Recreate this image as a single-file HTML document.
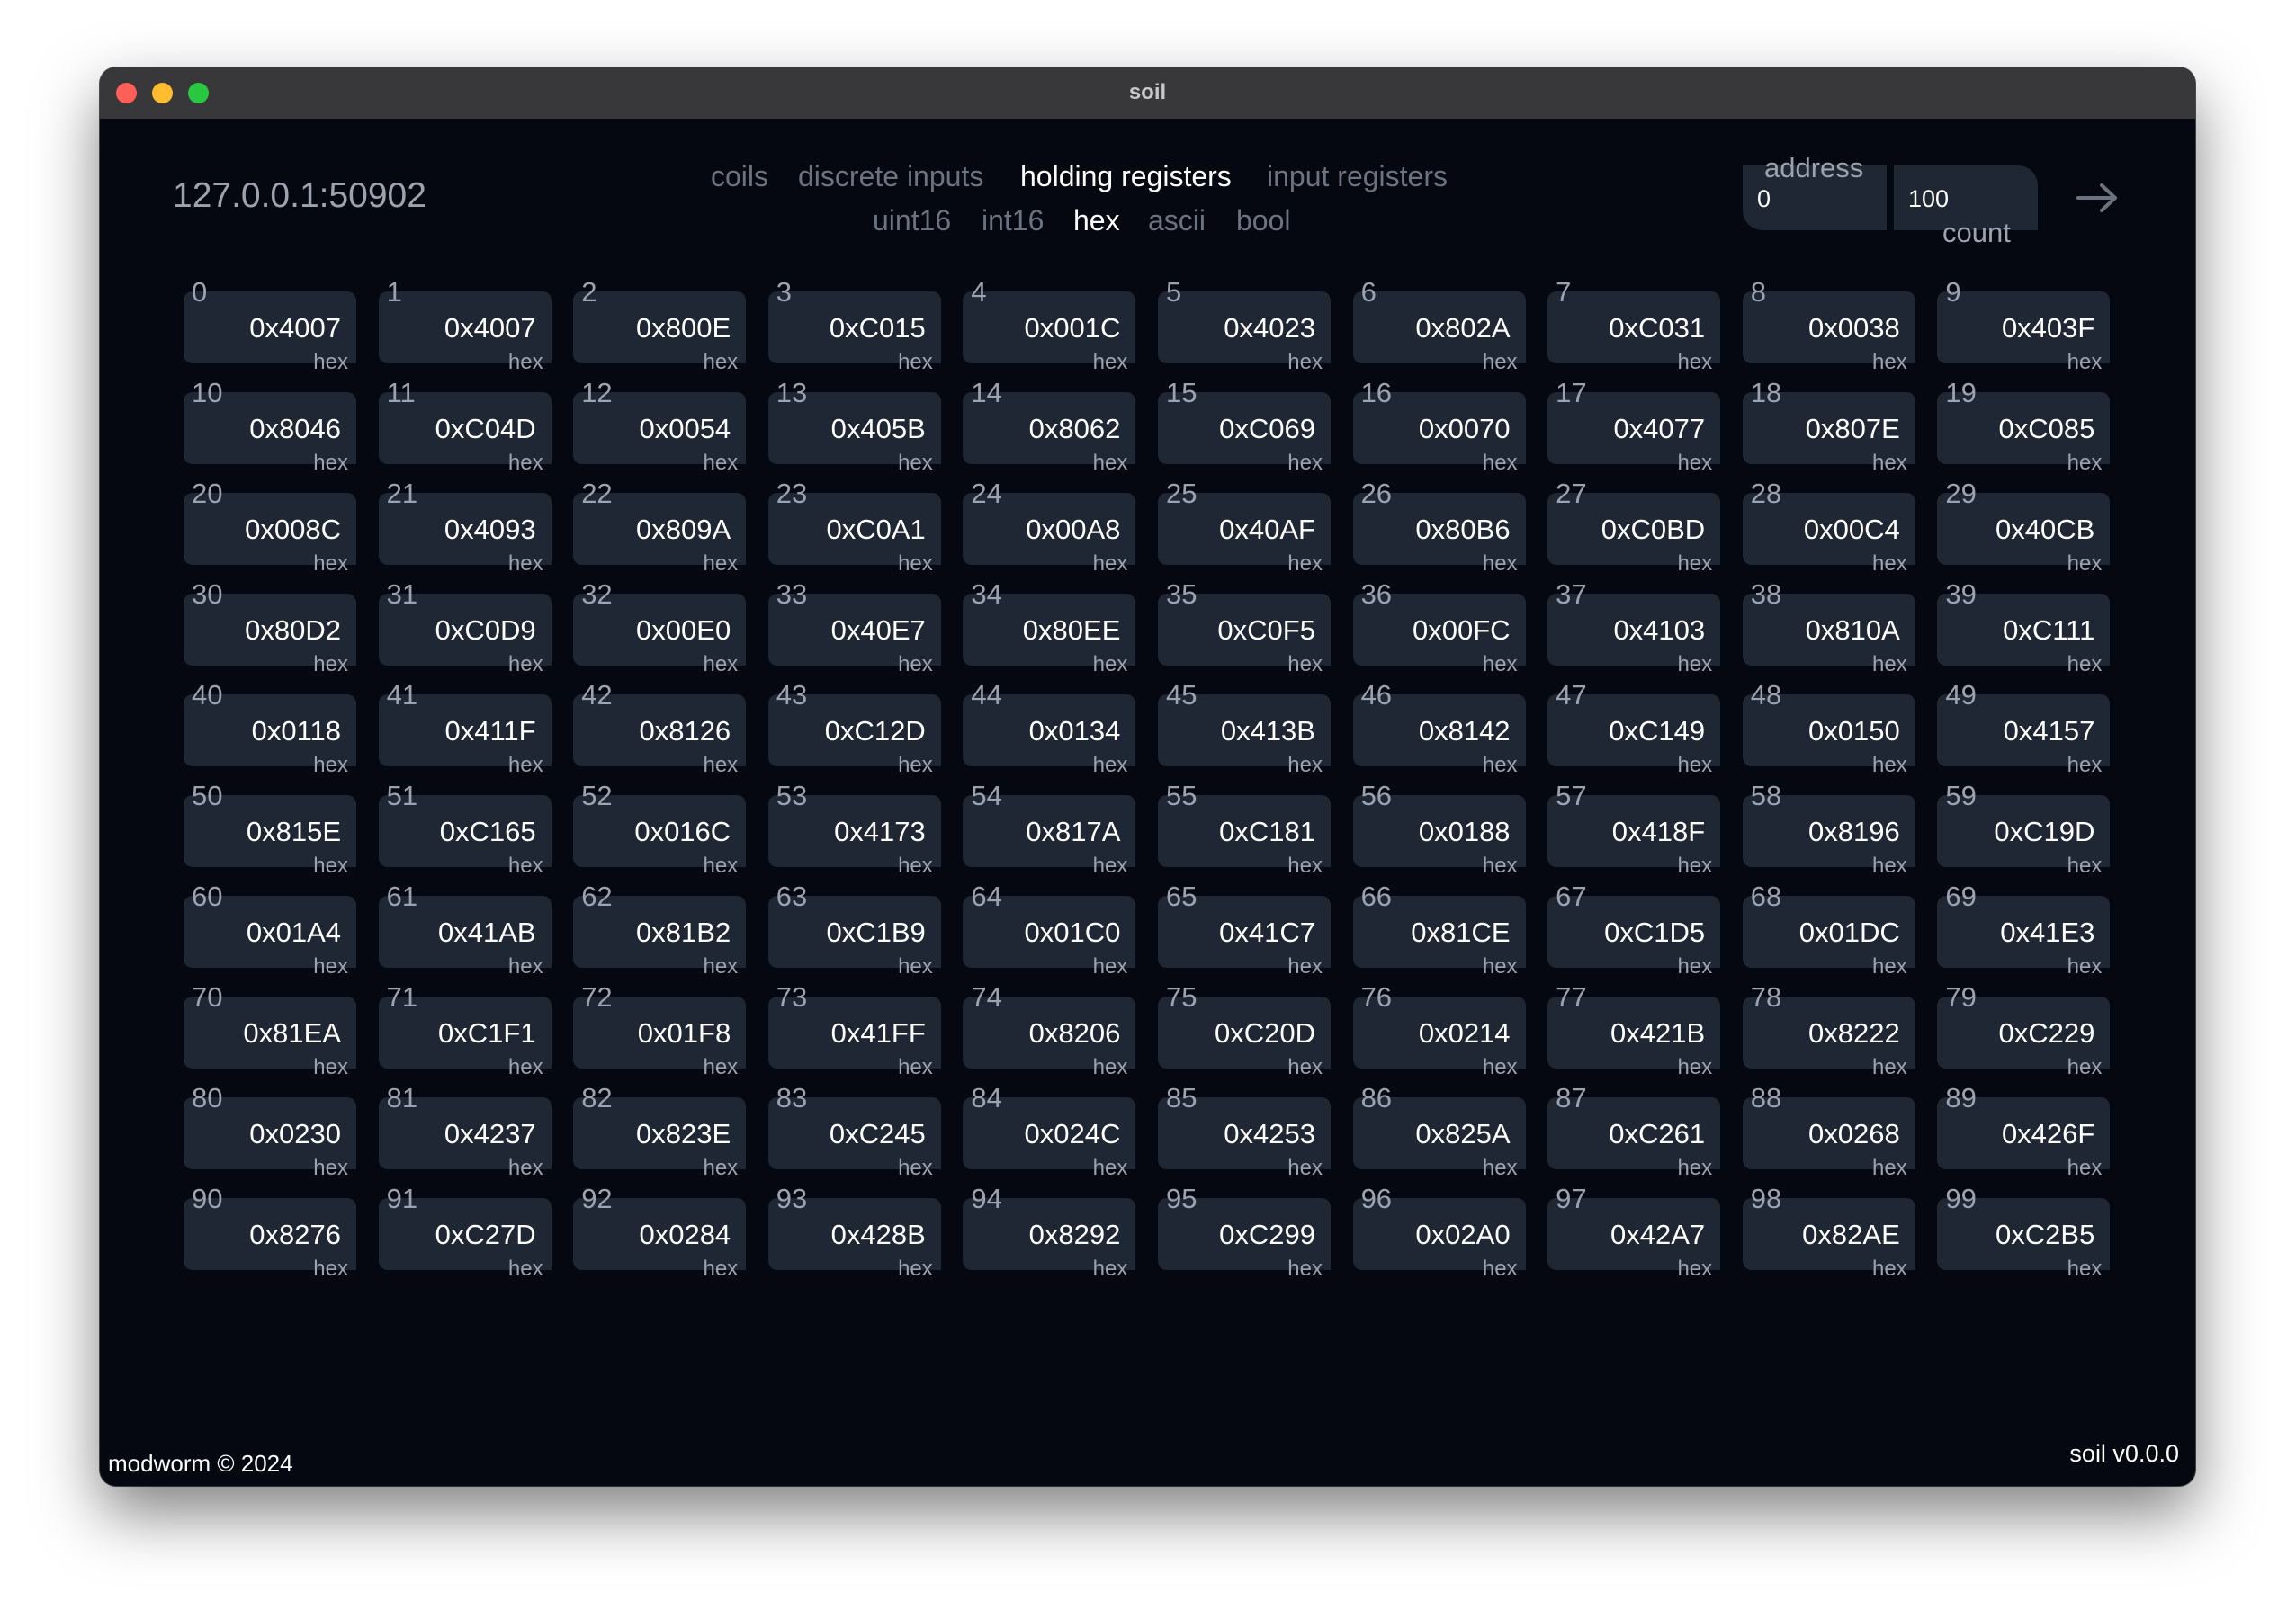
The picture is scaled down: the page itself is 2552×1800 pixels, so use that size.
<!DOCTYPE html>
<html><head><meta charset="utf-8"><style>
*{margin:0;padding:0;box-sizing:border-box}
html,body{width:2552px;height:1800px;overflow:hidden;background:#fff;font-family:"Liberation Sans",sans-serif}
#win{position:absolute;left:111px;top:75px;width:2329px;height:1577px;border-radius:18px;background:#050811;box-shadow:0 30px 70px rgba(0,0,0,0.5),0 0 0 1px #555;overflow:hidden}
#tb{position:absolute;left:0;top:0;width:100%;height:57px;background:#38383a}
.dot{position:absolute;top:17px;width:23px;height:23px;border-radius:50%}
#title{position:absolute;left:0;width:100%;top:14px;text-align:center;color:#c8c8c8;font-weight:bold;font-size:24px}
.a{position:absolute;white-space:nowrap}
.n{color:#6b7280;font-size:32px;line-height:1}
.w{color:#fff}
#grid{position:absolute;left:93px;top:249px;display:grid;grid-template-columns:repeat(10,192px);column-gap:24.6px;row-gap:32px}
.c{position:relative;width:192px;height:80px;background:#1f2734;border-radius:10px 10px 0 10px}
.c i{position:absolute;left:9px;top:-15px;font-style:normal;font-size:31px;line-height:1;color:#9ca3af}
.c b{position:absolute;right:17px;top:25px;font-weight:normal;font-size:31px;line-height:1;color:#fff}
.c u{position:absolute;right:9px;top:67px;text-decoration:none;font-size:24px;line-height:1;color:#9ca3af}
.box{position:absolute;top:109px;height:72px;width:160px;background:#1f2734}
</style></head><body>
<div id="win">
<div id="tb">
<div class="dot" style="left:18px;background:#fe5f57"></div>
<div class="dot" style="left:58px;background:#febc2e"></div>
<div class="dot" style="left:98px;background:#28c840"></div>
<div id="title">soil</div>
</div>
<div class="a" style="left:81px;top:123px;font-size:39px;line-height:1;color:#9ca3af">127.0.0.1:50902</div>
<div class="a n" style="left:679px;top:105px">coils</div>
<div class="a n" style="left:776px;top:105px">discrete inputs</div>
<div class="a n w" style="left:1023px;top:105px">holding registers</div>
<div class="a n" style="left:1297px;top:105px">input registers</div>
<div class="a n" style="left:859px;top:154px">uint16</div>
<div class="a n" style="left:980px;top:154px">int16</div>
<div class="a n w" style="left:1082px;top:154px">hex</div>
<div class="a n" style="left:1165px;top:154px">ascii</div>
<div class="a n" style="left:1263px;top:154px">bool</div>
<div class="box" style="left:1826px;border-radius:0 0 0 22px"></div>
<div class="box" style="left:1994px;border-radius:0 22px 0 0"></div>
<div class="a" style="left:1850px;top:96px;font-size:31px;line-height:1;color:#9ca3af">address</div>
<div class="a" style="left:1842px;top:133px;font-size:27px;line-height:1;color:#fff">0</div>
<div class="a" style="left:2010px;top:133px;font-size:27px;line-height:1;color:#fff">100</div>
<div class="a" style="left:2048px;top:168px;font-size:31px;line-height:1;color:#9ca3af">count</div>
<svg class="a" style="left:2196px;top:127px" width="48" height="36" viewBox="0 0 48 36"><path d="M3 18H44M29 4L44 18L29 32" fill="none" stroke="#6b7280" stroke-width="4" stroke-linecap="round" stroke-linejoin="round"/></svg>
<div id="grid">
<div class="c"><i>0</i><b>0x4007</b><u>hex</u></div><div class="c"><i>1</i><b>0x4007</b><u>hex</u></div><div class="c"><i>2</i><b>0x800E</b><u>hex</u></div><div class="c"><i>3</i><b>0xC015</b><u>hex</u></div><div class="c"><i>4</i><b>0x001C</b><u>hex</u></div><div class="c"><i>5</i><b>0x4023</b><u>hex</u></div><div class="c"><i>6</i><b>0x802A</b><u>hex</u></div><div class="c"><i>7</i><b>0xC031</b><u>hex</u></div><div class="c"><i>8</i><b>0x0038</b><u>hex</u></div><div class="c"><i>9</i><b>0x403F</b><u>hex</u></div>
<div class="c"><i>10</i><b>0x8046</b><u>hex</u></div><div class="c"><i>11</i><b>0xC04D</b><u>hex</u></div><div class="c"><i>12</i><b>0x0054</b><u>hex</u></div><div class="c"><i>13</i><b>0x405B</b><u>hex</u></div><div class="c"><i>14</i><b>0x8062</b><u>hex</u></div><div class="c"><i>15</i><b>0xC069</b><u>hex</u></div><div class="c"><i>16</i><b>0x0070</b><u>hex</u></div><div class="c"><i>17</i><b>0x4077</b><u>hex</u></div><div class="c"><i>18</i><b>0x807E</b><u>hex</u></div><div class="c"><i>19</i><b>0xC085</b><u>hex</u></div>
<div class="c"><i>20</i><b>0x008C</b><u>hex</u></div><div class="c"><i>21</i><b>0x4093</b><u>hex</u></div><div class="c"><i>22</i><b>0x809A</b><u>hex</u></div><div class="c"><i>23</i><b>0xC0A1</b><u>hex</u></div><div class="c"><i>24</i><b>0x00A8</b><u>hex</u></div><div class="c"><i>25</i><b>0x40AF</b><u>hex</u></div><div class="c"><i>26</i><b>0x80B6</b><u>hex</u></div><div class="c"><i>27</i><b>0xC0BD</b><u>hex</u></div><div class="c"><i>28</i><b>0x00C4</b><u>hex</u></div><div class="c"><i>29</i><b>0x40CB</b><u>hex</u></div>
<div class="c"><i>30</i><b>0x80D2</b><u>hex</u></div><div class="c"><i>31</i><b>0xC0D9</b><u>hex</u></div><div class="c"><i>32</i><b>0x00E0</b><u>hex</u></div><div class="c"><i>33</i><b>0x40E7</b><u>hex</u></div><div class="c"><i>34</i><b>0x80EE</b><u>hex</u></div><div class="c"><i>35</i><b>0xC0F5</b><u>hex</u></div><div class="c"><i>36</i><b>0x00FC</b><u>hex</u></div><div class="c"><i>37</i><b>0x4103</b><u>hex</u></div><div class="c"><i>38</i><b>0x810A</b><u>hex</u></div><div class="c"><i>39</i><b>0xC111</b><u>hex</u></div>
<div class="c"><i>40</i><b>0x0118</b><u>hex</u></div><div class="c"><i>41</i><b>0x411F</b><u>hex</u></div><div class="c"><i>42</i><b>0x8126</b><u>hex</u></div><div class="c"><i>43</i><b>0xC12D</b><u>hex</u></div><div class="c"><i>44</i><b>0x0134</b><u>hex</u></div><div class="c"><i>45</i><b>0x413B</b><u>hex</u></div><div class="c"><i>46</i><b>0x8142</b><u>hex</u></div><div class="c"><i>47</i><b>0xC149</b><u>hex</u></div><div class="c"><i>48</i><b>0x0150</b><u>hex</u></div><div class="c"><i>49</i><b>0x4157</b><u>hex</u></div>
<div class="c"><i>50</i><b>0x815E</b><u>hex</u></div><div class="c"><i>51</i><b>0xC165</b><u>hex</u></div><div class="c"><i>52</i><b>0x016C</b><u>hex</u></div><div class="c"><i>53</i><b>0x4173</b><u>hex</u></div><div class="c"><i>54</i><b>0x817A</b><u>hex</u></div><div class="c"><i>55</i><b>0xC181</b><u>hex</u></div><div class="c"><i>56</i><b>0x0188</b><u>hex</u></div><div class="c"><i>57</i><b>0x418F</b><u>hex</u></div><div class="c"><i>58</i><b>0x8196</b><u>hex</u></div><div class="c"><i>59</i><b>0xC19D</b><u>hex</u></div>
<div class="c"><i>60</i><b>0x01A4</b><u>hex</u></div><div class="c"><i>61</i><b>0x41AB</b><u>hex</u></div><div class="c"><i>62</i><b>0x81B2</b><u>hex</u></div><div class="c"><i>63</i><b>0xC1B9</b><u>hex</u></div><div class="c"><i>64</i><b>0x01C0</b><u>hex</u></div><div class="c"><i>65</i><b>0x41C7</b><u>hex</u></div><div class="c"><i>66</i><b>0x81CE</b><u>hex</u></div><div class="c"><i>67</i><b>0xC1D5</b><u>hex</u></div><div class="c"><i>68</i><b>0x01DC</b><u>hex</u></div><div class="c"><i>69</i><b>0x41E3</b><u>hex</u></div>
<div class="c"><i>70</i><b>0x81EA</b><u>hex</u></div><div class="c"><i>71</i><b>0xC1F1</b><u>hex</u></div><div class="c"><i>72</i><b>0x01F8</b><u>hex</u></div><div class="c"><i>73</i><b>0x41FF</b><u>hex</u></div><div class="c"><i>74</i><b>0x8206</b><u>hex</u></div><div class="c"><i>75</i><b>0xC20D</b><u>hex</u></div><div class="c"><i>76</i><b>0x0214</b><u>hex</u></div><div class="c"><i>77</i><b>0x421B</b><u>hex</u></div><div class="c"><i>78</i><b>0x8222</b><u>hex</u></div><div class="c"><i>79</i><b>0xC229</b><u>hex</u></div>
<div class="c"><i>80</i><b>0x0230</b><u>hex</u></div><div class="c"><i>81</i><b>0x4237</b><u>hex</u></div><div class="c"><i>82</i><b>0x823E</b><u>hex</u></div><div class="c"><i>83</i><b>0xC245</b><u>hex</u></div><div class="c"><i>84</i><b>0x024C</b><u>hex</u></div><div class="c"><i>85</i><b>0x4253</b><u>hex</u></div><div class="c"><i>86</i><b>0x825A</b><u>hex</u></div><div class="c"><i>87</i><b>0xC261</b><u>hex</u></div><div class="c"><i>88</i><b>0x0268</b><u>hex</u></div><div class="c"><i>89</i><b>0x426F</b><u>hex</u></div>
<div class="c"><i>90</i><b>0x8276</b><u>hex</u></div><div class="c"><i>91</i><b>0xC27D</b><u>hex</u></div><div class="c"><i>92</i><b>0x0284</b><u>hex</u></div><div class="c"><i>93</i><b>0x428B</b><u>hex</u></div><div class="c"><i>94</i><b>0x8292</b><u>hex</u></div><div class="c"><i>95</i><b>0xC299</b><u>hex</u></div><div class="c"><i>96</i><b>0x02A0</b><u>hex</u></div><div class="c"><i>97</i><b>0x42A7</b><u>hex</u></div><div class="c"><i>98</i><b>0x82AE</b><u>hex</u></div><div class="c"><i>99</i><b>0xC2B5</b><u>hex</u></div>
</div>
<div class="a" style="left:9px;top:1539px;font-size:26px;line-height:1;color:#fff">modworm © 2024</div>
<div class="a" style="right:18px;top:1528px;font-size:27px;line-height:1;color:#fff">soil v0.0.0</div>
</div>
</body></html>
